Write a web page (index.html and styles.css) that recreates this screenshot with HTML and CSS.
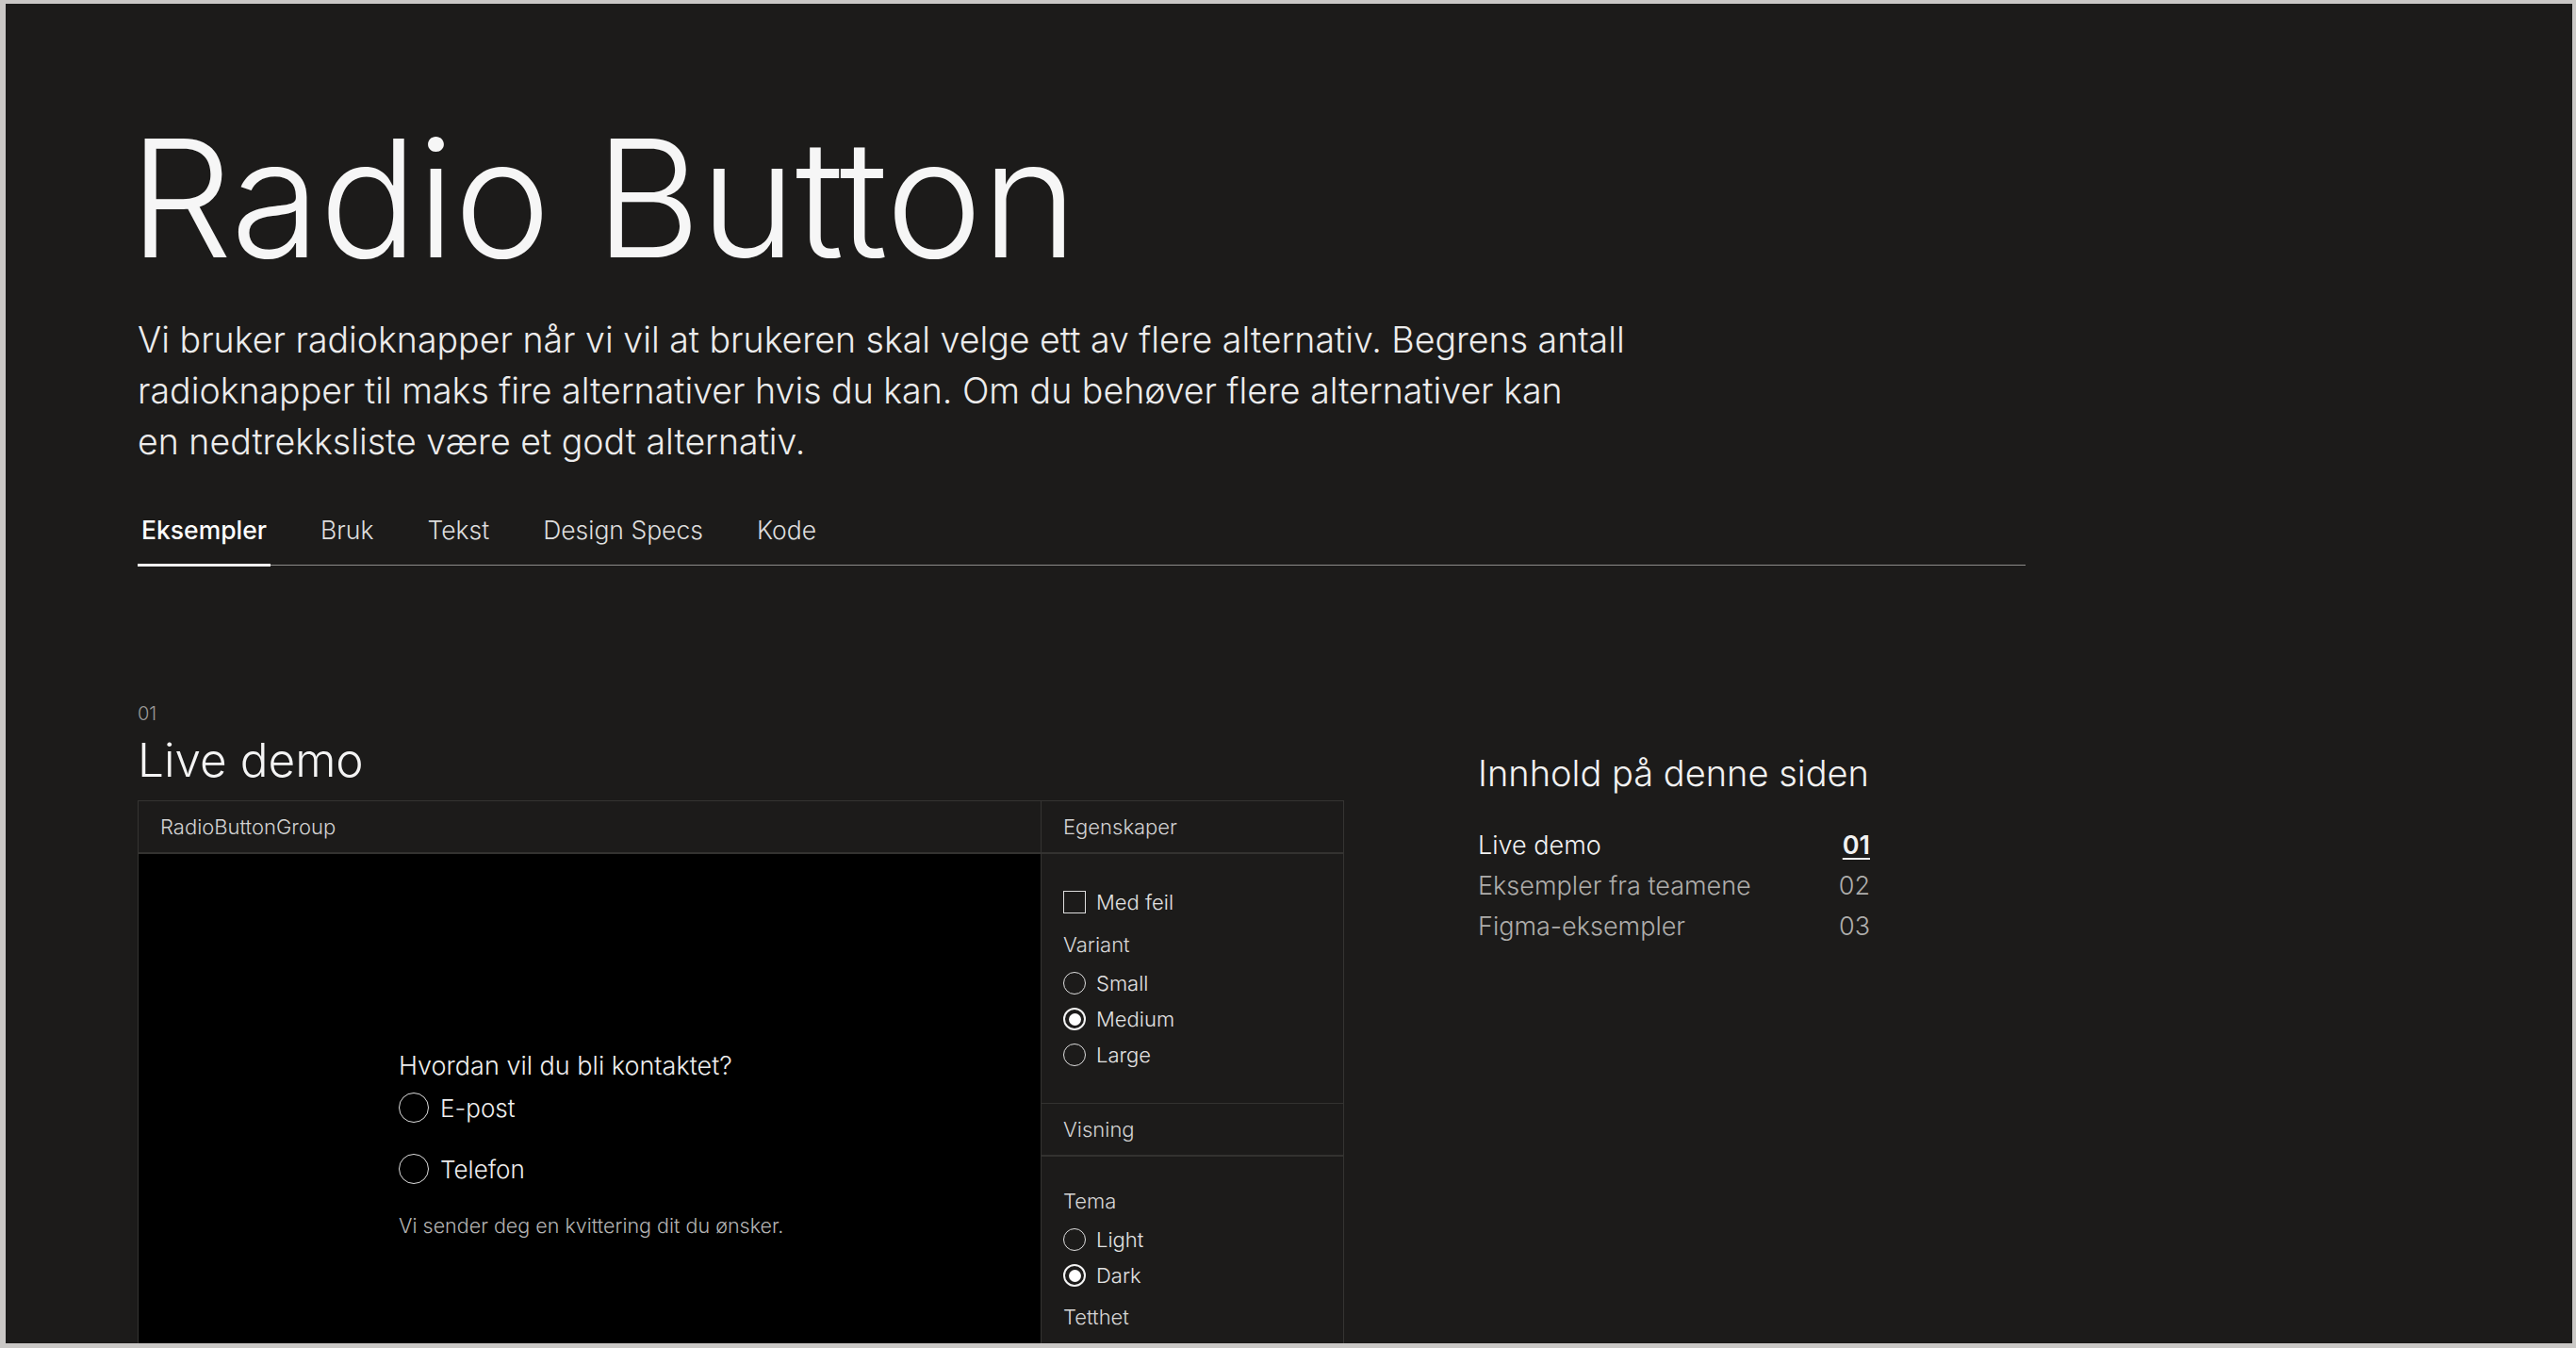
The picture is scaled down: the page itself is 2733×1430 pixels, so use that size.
FILE: index.html
```html
<!DOCTYPE html>
<html lang="no">
<head>
<meta charset="utf-8">
<title>Radio Button</title>
<link rel="stylesheet" href="styles.css">
</head>
<body>
<div class="page">
  <header class="hero">
    <h1 class="title">Radio Button</h1>
    <p class="lead">Vi bruker radioknapper når vi vil at brukeren skal velge ett av flere alternativ. Begrens antall<br>radioknapper til maks fire alternativer hvis du kan. Om du behøver flere alternativer kan<br>en nedtrekksliste være et godt alternativ.</p>
    <nav class="tabs">
      <a class="tab active">Eksempler</a>
      <a class="tab">Bruk</a>
      <a class="tab">Tekst</a>
      <a class="tab">Design Specs</a>
      <a class="tab">Kode</a>
    </nav>
  </header>

  <div class="content">
    <section class="section">
      <div class="sec-num">01</div>
      <h2 class="sec-title">Live demo</h2>
      <div class="demo">
        <div class="demo-main">
          <div class="demo-head">RadioButtonGroup</div>
          <div class="preview">
            <div class="rb-group">
              <div class="rb-legend">Hvordan vil du bli kontaktet?</div>
              <div class="rb-options">
                <label class="rb"><span class="rb-circle"></span>E-post</label>
                <label class="rb"><span class="rb-circle"></span>Telefon</label>
              </div>
              <p class="rb-help">Vi sender deg en kvittering dit du ønsker.</p>
            </div>
          </div>
        </div>
        <aside class="props">
          <div class="demo-head">Egenskaper</div>
          <div class="prop-body first">
            <div class="check-row"><span class="checkbox"></span>Med feil</div>
            <div class="group-label">Variant</div>
            <div class="radio-list">
              <div class="radio-row"><span class="radio-dot"></span>Small</div>
              <div class="radio-row"><span class="radio-dot checked"></span>Medium</div>
              <div class="radio-row"><span class="radio-dot"></span>Large</div>
            </div>
          </div>
          <div class="demo-head sub">Visning</div>
          <div class="prop-body">
            <div class="group-label">Tema</div>
            <div class="radio-list">
              <div class="radio-row"><span class="radio-dot"></span>Light</div>
              <div class="radio-row"><span class="radio-dot checked"></span>Dark</div>
            </div>
            <div class="group-label">Tetthet</div>
          </div>
        </aside>
      </div>
    </section>

    <aside class="toc">
      <h3 class="toc-title">Innhold på denne siden</h3>
      <ul class="toc-list">
        <li class="toc-item current"><span>Live demo</span><span class="num">01</span></li>
        <li class="toc-item"><span>Eksempler fra teamene</span><span class="num">02</span></li>
        <li class="toc-item"><span>Figma-eksempler</span><span class="num">03</span></li>
      </ul>
    </aside>
  </div>
</div>
</body>
</html>
```
FILE: styles.css
```css
html {
  background: #cac8c6;
}
body {
  margin: 4px 4px 5px 6px;
  height: 1421px;
  overflow: hidden;
  background: #1c1b1a;
  color: #f2f2f2;
  font-family: Inter, "Liberation Sans", sans-serif;
}
.page {
  padding: 120px 0 0 140px;
}
.title {
  margin: 0 0 0 -9px;
  font-size: 173px;
  line-height: 173px;
  font-weight: 300;
  letter-spacing: -0.005em;
  color: #f6f6f6;
}
.lead {
  margin: 37px 0 0;
  font-size: 37.5px;
  line-height: 54px;
  font-weight: 300;
  white-space: nowrap;
  color: #ececec;
}
.tabs {
  margin-top: 49px;
  width: 2003px;
  display: flex;
  gap: 49px;
  border-bottom: 1px solid #8c8b89;
}
.tab {
  position: relative;
  padding: 0 4px 20px;
  font-size: 26.5px;
  line-height: 34px;
  font-weight: 300;
  color: #dedede;
}
.tab.active {
  font-weight: 500;
  color: #ffffff;
}
.tab.active::after {
  content: "";
  position: absolute;
  left: 0;
  right: 0;
  bottom: -2px;
  height: 3px;
  background: #f2f2f2;
}

.content {
  margin-top: 145px;
  display: grid;
  grid-template-columns: 1280px 416px;
  column-gap: 142px;
  align-items: start;
}
.sec-num {
  font-size: 20px;
  line-height: 24px;
  font-weight: 300;
  color: #9a9997;
}
.sec-title {
  margin: 7px 0 0;
  font-size: 49.5px;
  line-height: 60px;
  font-weight: 300;
  color: #f4f4f4;
}
.demo {
  margin-top: 13px;
  display: grid;
  grid-template-columns: 957px 321px;
  border: 1px solid #353432;
  border-bottom: none;
}
.demo-head {
  height: 54px;
  display: flex;
  align-items: center;
  padding: 0 23px;
  font-size: 22px;
  font-weight: 300;
  color: #d2d2d2;
  border-bottom: 2px solid #333230;
}
.demo-head.sub {
  border-top: 1px solid #333230;
}
.preview {
  height: 600px;
  padding: 208px 0 0 276px;
  background: #000000;
}
.rb-legend {
  font-size: 27px;
  line-height: 33px;
  font-weight: 300;
  color: #eeeeee;
}
.rb-options {
  margin-top: 4px;
  display: flex;
  flex-direction: column;
  gap: 17px;
}
.rb {
  height: 48px;
  display: flex;
  align-items: center;
  gap: 12px;
  font-size: 26px;
  font-weight: 300;
  color: #eeeeee;
}
.rb-circle {
  width: 32px;
  height: 32px;
  box-sizing: border-box;
  border: 1.5px solid #dddddd;
  border-radius: 50%;
}
.rb-help {
  margin: 22px 0 0;
  font-size: 21.5px;
  line-height: 28px;
  font-weight: 300;
  color: #b3b3b3;
}

.props {
  border-left: 1px solid #353432;
}
.prop-body {
  padding: 32px 23px;
  display: flex;
  flex-direction: column;
}
.prop-body.first {
  padding-top: 31px;
}
.check-row {
  height: 40px;
  display: flex;
  align-items: center;
  gap: 11px;
  font-size: 22px;
  font-weight: 300;
  color: #e2e2e2;
}
.checkbox {
  width: 24px;
  height: 24px;
  box-sizing: border-box;
  border: 1.5px solid #dddddd;
}
.group-label {
  margin-top: 10px;
  height: 30px;
  line-height: 30px;
  font-size: 22px;
  font-weight: 300;
  color: #d6d6d6;
}
.group-label:first-child {
  margin-top: 0;
}
.radio-list {
  margin-top: 7px;
  display: flex;
  flex-direction: column;
}
.radio-row {
  height: 38px;
  display: flex;
  align-items: center;
  gap: 11px;
  font-size: 22px;
  font-weight: 300;
  color: #e2e2e2;
}
.radio-dot {
  width: 24px;
  height: 24px;
  box-sizing: border-box;
  border: 1.5px solid #dddddd;
  border-radius: 50%;
  display: flex;
  align-items: center;
  justify-content: center;
}
.radio-dot.checked {
  border: 2px solid #f2f2f2;
}
.radio-dot.checked::after {
  content: "";
  width: 13px;
  height: 13px;
  border-radius: 50%;
  background: #ffffff;
}

.toc {
  padding-top: 52px;
}
.toc-title {
  margin: 0;
  font-size: 38px;
  line-height: 46px;
  font-weight: 300;
  color: #f2f2f2;
}
.toc-list {
  margin: 32px 0 0;
  padding: 0;
  list-style: none;
}
.toc-item {
  display: flex;
  justify-content: space-between;
  font-size: 27px;
  line-height: 43px;
  font-weight: 300;
  color: #aeadab;
}
.toc-item.current {
  color: #f2f2f2;
}
.toc-item.current .num {
  font-weight: 600;
  text-decoration: underline;
  text-underline-offset: 4px;
}
```
